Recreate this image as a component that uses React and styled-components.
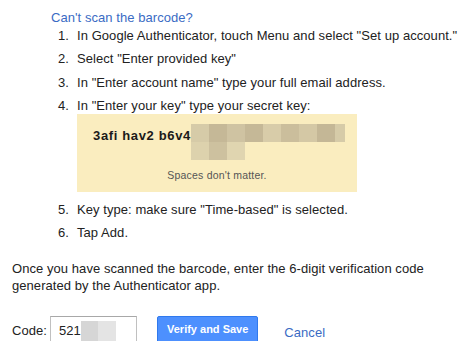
import React from 'react'
import styled, { createGlobalStyle } from 'styled-components'

const GlobalStyle = createGlobalStyle`
  html, body {
    margin: 0;
    padding: 0;
    background: #fff;
  }
  body {
    font-family: "Liberation Sans", Arial, sans-serif;
    font-size: 13px;
    letter-spacing: 0.06px;
    color: #222;
  }
`

const Page = styled.div`
  width: 467px;
  height: 341px;
  overflow: hidden;
  padding-left: 12px;
  box-sizing: border-box;
`

const Heading = styled.div`
  margin-left: 39px;
  padding-top: 9px;
  line-height: 17px;
  color: #3a6bc4;
`

const Steps = styled.ol`
  list-style: none;
  margin: 1px 0 0 46px;
  padding: 0;
`

const Step = styled.li`
  display: flex;
  flex-wrap: wrap;
  line-height: 17px;
  margin-bottom: ${p => p.$gap ?? 6.3}px;
`

const Num = styled.span`
  width: 19px;
  flex: none;
`

const StepText = styled.span`
  flex: 1;
  white-space: nowrap;
`

const KeyBox = styled.div`
  margin: 0.6px 0 0 19px;
  width: 280px;
  height: 78px;
  box-sizing: border-box;
  background: #faedbf;
  padding: 10px 0 0 16px;
  display: flex;
  flex-direction: column;
`

const KeyRow = styled.div`
  display: flex;
  align-items: flex-start;
`

const KeyText = styled.span`
  font-weight: bold;
  font-size: 13px;
  line-height: 17px;
  letter-spacing: 0.65px;
  padding-top: 3px;
  color: #1a1a1a;
`

const Mosaic = styled.div`
  display: flex;
  flex-direction: column;
`

const MosaicRow = styled.div`
  display: flex;
`

const Cell = styled.span`
  display: block;
  width: ${p => p.$w || 18}px;
  height: 18px;
  background: ${p => p.$c};
`

const Hint = styled.div`
  font-size: 10.5px;
  color: #555;
  text-align: center;
  margin: 9px 0 0 -16px;
  line-height: 13px;
  letter-spacing: 0.2px;
`

const Para = styled.p`
  margin: 18.8px 0 0;
  line-height: 17.5px;
  width: 430px;
`

const CodeRow = styled.div`
  display: flex;
  align-items: flex-start;
  margin-top: 21px;
`

const Label = styled.label`
  line-height: 17px;
  padding-top: 6px;
  width: 38px;
`

const CodeInput = styled.div`
  width: 87px;
  height: 29px;
  box-sizing: border-box;
  border: 1px solid #c0c0c0;
  border-top-color: #a8a8a8;
  padding: 5px 0 0 8px;
  display: flex;
  align-items: flex-start;
  line-height: 17px;
`

const Blur = styled.span`
  display: flex;
  margin-top: -1px;
`

const BlurCell = styled.span`
  display: block;
  width: ${p => p.$w}px;
  height: 22px;
  background: ${p => p.$c};
`

const VerifyButton = styled.button`
  margin-left: 20px;
  height: 27px;
  padding: 0 9px;
  border: 1px solid #3079ed;
  border-radius: 2px;
  background: #4d90fe;
  color: #fff;
  font-family: "Liberation Sans", Arial, sans-serif;
  font-weight: bold;
  font-size: 11px;
`

const CancelLink = styled.a`
  margin-left: 26px;
  padding-top: 8px;
  line-height: 17px;
  color: #3a6bc4;
  text-decoration: none;
`

const row1 = [
  ['#d6cba8', 18], ['#c5b897', 18], ['#cfc3a2', 18], ['#c5b897', 18],
  ['#d8cca9', 18], ['#cbbe9c', 18], ['#d4c8a5', 18], ['#c4b796', 18], ['#d6cba8', 10],
]
const row2 = [['#ddd2ad', 18], ['#cdc19f', 18], ['#e0d5b0', 18]]

export default function App() {
  return (
    <Page>
      <GlobalStyle />
      <Heading>Can't scan the barcode?</Heading>
      <Steps>
        <Step><Num>1.</Num><StepText>In Google Authenticator, touch Menu and select "Set up account."</StepText></Step>
        <Step><Num>2.</Num><StepText>Select "Enter provided key"</StepText></Step>
        <Step><Num>3.</Num><StepText>In "Enter account name" type your full email address.</StepText></Step>
        <Step $gap={8.2}>
          <Num>4.</Num><StepText>In "Enter your key" type your secret key:</StepText>
          <KeyBox>
            <KeyRow>
              <KeyText>3afi hav2 b6v4</KeyText>
              <Mosaic>
                <MosaicRow>{row1.map(([c, w], i) => <Cell key={i} $c={c} $w={w} />)}</MosaicRow>
                <MosaicRow>{row2.map(([c, w], i) => <Cell key={i} $c={c} $w={w} />)}</MosaicRow>
              </Mosaic>
            </KeyRow>
            <Hint>Spaces don't matter.</Hint>
          </KeyBox>
        </Step>
        <Step><Num>5.</Num><StepText>Key type: make sure "Time-based" is selected.</StepText></Step>
        <Step $gap={0}><Num>6.</Num><StepText>Tap Add.</StepText></Step>
      </Steps>
      <Para>Once you have scanned the barcode, enter the 6-digit verification code generated by the Authenticator app.</Para>
      <CodeRow>
        <Label>Code:</Label>
        <CodeInput>
          521
          <Blur>
            <BlurCell $w={17} $c="#d6d6d6" />
            <BlurCell $w={18} $c="#e4e4e4" />
          </Blur>
        </CodeInput>
        <VerifyButton>Verify and Save</VerifyButton>
        <CancelLink href="#">Cancel</CancelLink>
      </CodeRow>
    </Page>
  )
}
